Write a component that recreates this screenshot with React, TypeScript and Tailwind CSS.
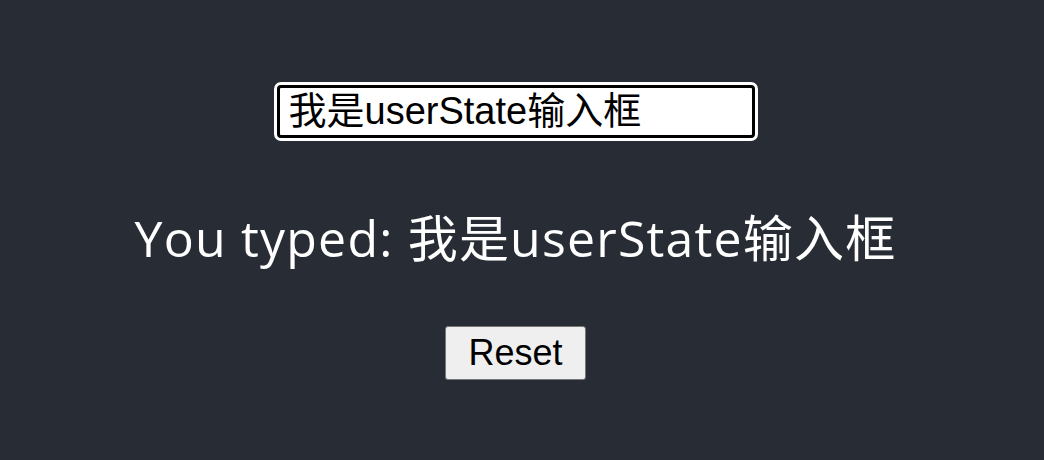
import { useState } from 'react';

export default function App() {
  const [text, setText] = useState('我是userState输入框');

  return (
    <div className="min-h-screen w-full bg-[#282c34] flex flex-col items-center pt-[85px] pr-[13px]">
      <input
        type="text"
        value={text}
        onChange={(e) => setText(e.target.value)}
        className="h-[53px] w-[478px] bg-white border-[3px] border-black rounded-[4px] ring-[3px] ring-white outline-none pl-[9px] text-[38px] text-black font-['Liberation_Sans','Noto_Sans_CJK_SC',sans-serif]"
      />
      <h1 className="mt-[70px] h-[60px] leading-[60px] text-[50px] tracking-[1.2px] text-white whitespace-nowrap font-['Open_Sans','Noto_Sans_CJK_SC',sans-serif]">
        You typed: {text}
      </h1>
      <button
        type="button"
        onClick={() => setText('')}
        className="mt-[58px] h-[54px] w-[141px] bg-[#efefef] border border-[#767676] rounded-[3px] text-[36px] leading-none text-black font-['Liberation_Sans',sans-serif]"
      >
        Reset
      </button>
    </div>
  );
}
